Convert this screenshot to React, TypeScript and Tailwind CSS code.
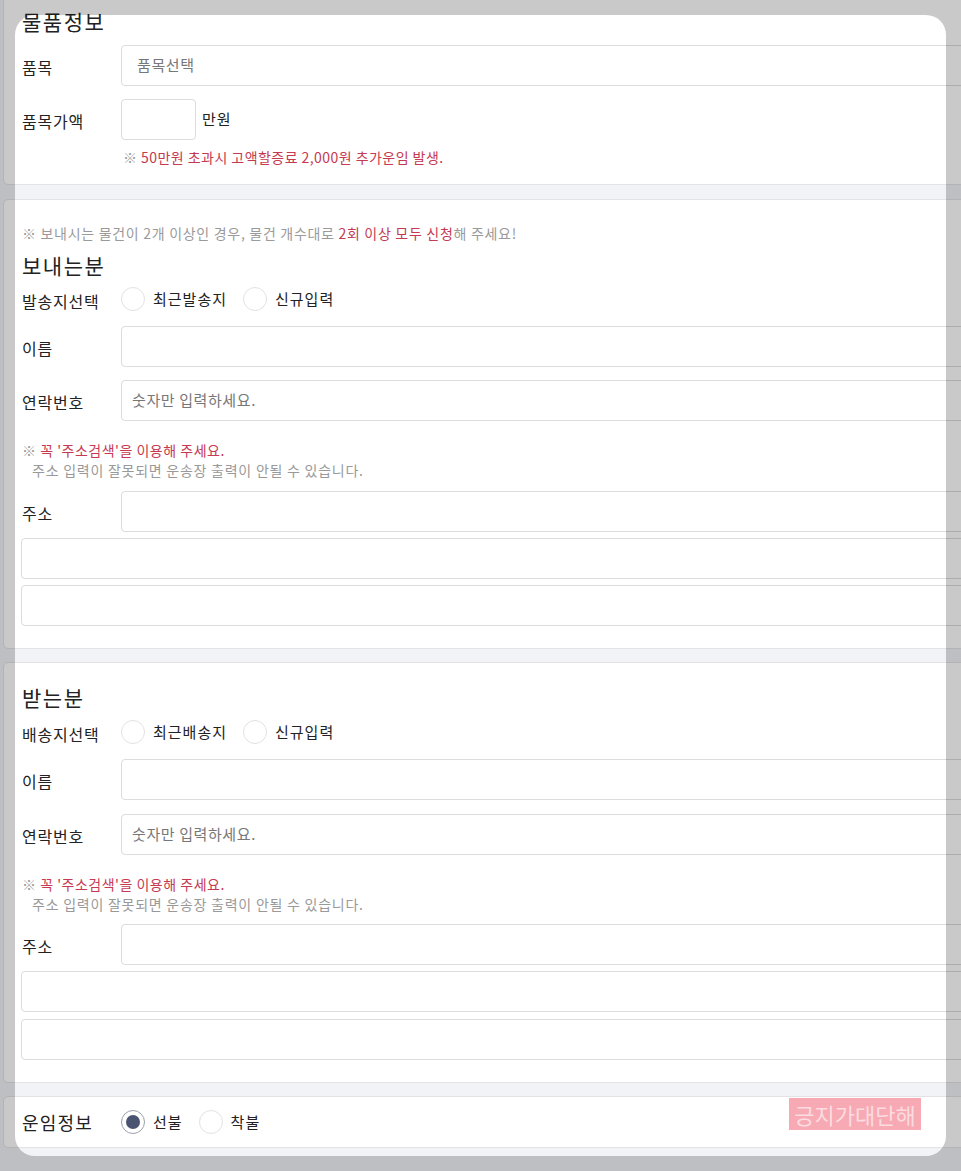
import React from "react"

const RED = "text-[#c53a51]"

function Radio({ label, checked = false }: { label: string; checked?: boolean }) {
  return (
    <label className="mr-[16px] flex items-center">
      <span
        className={`flex h-[24px] w-[24px] items-center justify-center rounded-full border bg-white ${
          checked ? "border-[#9aa0ab]" : "border-[#e2e2e2]"
        }`}
      >
        {checked && <span className="h-[14px] w-[14px] rounded-full bg-[#4a5472]" />}
      </span>
      <span className="ml-[8px] text-[15px] leading-[20px] tracking-[1px] text-[#222]">{label}</span>
    </label>
  )
}

function Box({ text, className = "" }: { text?: string; className?: string }) {
  return (
    <div
      className={`flex h-[41px] items-center rounded-[4px] border border-[#dcdcdc] bg-white text-[15px] tracking-[0.6px] text-[#777] ${className}`}
    >
      {text}
    </div>
  )
}

function Row({ label, children, className = "" }: { label: string; children: React.ReactNode; className?: string }) {
  return (
    <div className={`flex items-center ${className}`}>
      <div className="w-[99px] shrink-0 pt-[3px] text-[16px] leading-[22px] tracking-[0.8px] text-[#222]">{label}</div>
      {children}
    </div>
  )
}

// 보내는분 / 받는분 share the same form
function PersonFields({ kind, addrGap }: { kind: "send" | "recv"; addrGap: string }) {
  const recent = kind === "send" ? "최근발송지" : "최근배송지"
  return (
    <>
      <Row label={kind === "send" ? "발송지선택" : "배송지선택"} className="h-[26px]">
        <Radio label={recent} />
        <Radio label="신규입력" />
      </Row>
      <Row label="이름" className="mt-[14px]">
        <Box className="flex-1" />
      </Row>
      <Row label="연락번호" className={kind === "send" ? "mt-[13px]" : "mt-[14px]"}>
        <Box text="숫자만 입력하세요." className="flex-1 pl-[10px]" />
      </Row>
      <p className="mt-[19px] text-[14px] leading-[20px] tracking-[0.5px]">
        <span className="text-[#9a9a9a]">※ </span>
        <span className={RED}>꼭 '주소검색'을 이용해 주세요.</span>
      </p>
      <p className="pl-[10px] text-[14px] leading-[20px] tracking-[0.75px] text-[#999]">
        주소 입력이 잘못되면 운송장 출력이 안될 수 있습니다.
      </p>
      <Row label="주소" className={addrGap}>
        <Box className="flex-1" />
      </Row>
      <Box className="ml-[-1px] mt-[6px]" />
      <Box className={`ml-[-1px] ${kind === "send" ? "mt-[6px]" : "mt-[7px]"}`} />
    </>
  )
}

export default function App() {
  return (
    <div className="relative min-h-[1171px] w-full overflow-hidden bg-[#f2f3f7] font-['Noto_Sans_CJK_KR',sans-serif]">
      {/* 물품정보 */}
      <section className="ml-[3px] mt-[-10px] w-[1100px] rounded-[5px] border border-[#e3e3e6] bg-white pb-[17px] pl-[18px] pt-[17px]">
        <h2 className="text-[21px] font-normal leading-[26px] tracking-[1.5px] text-[#222]">물품정보</h2>
        <Row label="품목" className="mt-[11px]">
          <Box text="품목선택" className="flex-1 pl-[15px]" />
        </Row>
        <Row label="품목가액" className="mt-[13px]">
          <Box className="w-[75px]" />
          <span className="ml-[6px] text-[15px] tracking-[1px] text-[#222]">만원</span>
        </Row>
        <p className="ml-[101px] mt-[7px] text-[14px] leading-[20px] tracking-[0.45px]">
          <span className="text-[#9a9a9a]">※ </span>
          <span className={RED}>50만원 초과시 고액할증료 2,000원 추가운임 발생.</span>
        </p>
      </section>

      {/* 보내는분 */}
      <section className="ml-[3px] mt-[14px] w-[1100px] rounded-[5px] border border-[#e3e3e6] bg-white pb-[22px] pl-[18px] pt-[23px]">
        <p className="text-[14px] leading-[20px] tracking-[0.7px] text-[#9a9a9a]">
          ※ 보내시는 물건이 2개 이상인 경우, 물건 개수대로 <span className={RED}>2회 이상 모두 신청</span>해 주세요!
        </p>
        <h2 className="mb-[8px] mt-[9px] text-[21px] font-normal leading-[26px] tracking-[1.5px] text-[#222]">보내는분</h2>
        <PersonFields kind="send" addrGap="mt-[11px]" />
      </section>

      {/* 받는분 */}
      <section className="ml-[3px] mt-[13px] w-[1100px] rounded-[5px] border border-[#e3e3e6] bg-white pb-[22px] pl-[18px] pt-[21px]">
        <h2 className="mb-[9px] text-[21px] font-normal leading-[26px] tracking-[1.5px] text-[#222]">받는분</h2>
        <PersonFields kind="recv" addrGap="mt-[10px]" />
      </section>

      {/* 운임정보 */}
      <section className="ml-[3px] mt-[13px] flex h-[52px] w-[1100px] items-center rounded-[5px] border border-[#e3e3e6] bg-white pl-[18px]">
        <div className="w-[99px] shrink-0 text-[18px] leading-[24px] tracking-[1.2px] text-[#222]">운임정보</div>
        <Radio label="선불" checked />
        <Radio label="착불" />
      </section>

      {/* spotlight overlay */}
      <div className="pointer-events-none absolute left-[15px] top-[15px] h-[1141px] w-[931px] rounded-[20px] shadow-[0_0_0_3000px_rgba(0,0,0,0.21)]" />

      <div className="absolute left-[789px] top-[1098px] h-[32px] w-[132px] bg-[#f7a9b4] text-center text-[22px] leading-[32px] text-white/60">
        긍지가대단해
      </div>
    </div>
  )
}
